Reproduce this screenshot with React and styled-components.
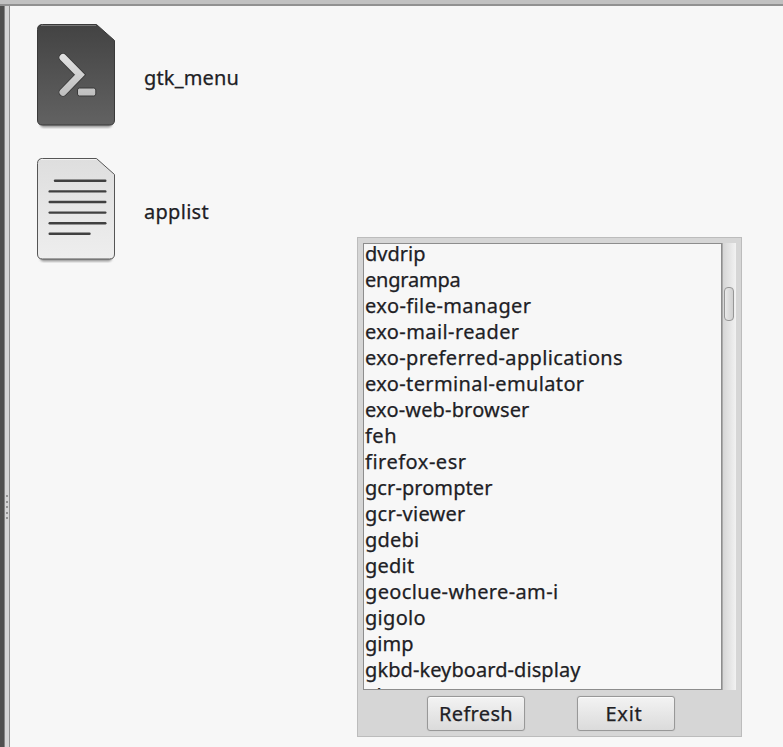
import React, { useLayoutEffect, useRef, useState } from "react";
import styled, { createGlobalStyle } from "styled-components";

const GlobalStyle = createGlobalStyle`
  * { box-sizing: border-box; }
  html, body { margin: 0; background: #f7f7f7; }
  body {
    overflow: hidden;
    font: 20px/26px "Noto Sans", "Open Sans", sans-serif;
    color: #202024;
    -webkit-text-stroke: 0.25px #202024;
  }
`;

const Screen = styled.div`
  display: flex;
  flex-direction: column;
  width: 783px;
  height: 747px;
  overflow: hidden;
  position: relative;
`;
const TopBar = styled.div`
  flex: none;
  height: 6px;
  background: #c1c1c1;
  border-bottom: 2px solid #919191;
`;
const Body = styled.div`
  flex: 1;
  display: flex;
`;
const SidePane = styled.div`
  width: 5px;
  background: #50504f;
  border-right: 1px solid #858585;
`;
const Splitter = styled.div`
  width: 5px;
  background: #d6d6d6;
  border-right: 1px solid #919191;
  display: flex;
  flex-direction: column;
  justify-content: center;
  align-items: center;
  gap: 3.5px;
  padding-top: 261px;
`;
const Grip = styled.i`
  width: 2px;
  height: 2px;
  background: #929292;
`;
const Files = styled.div`
  flex: 1;
  background: #f7f7f7;
  padding: 17px 0 0 27px;
  display: flex;
  flex-direction: column;
  gap: 26px;
`;
const FileItem = styled.div`
  display: flex;
  align-items: center;
  height: 108px;
  gap: 27px;
  svg { flex: none; }
`;
const FileName = styled.div`
  padding-top: 2px;
`;
const Dialog = styled.div`
  position: absolute;
  left: 357px;
  top: 237px;
  width: 385px;
  height: 500px;
  padding: 5px;
  background: #d6d6d6;
  border: 1px solid #bcbcbc;
  display: flex;
  flex-direction: column;
`;
const ListArea = styled.div`
  display: flex;
  height: 447px;
`;
const List = styled.div`
  width: 359px;
  border: 1px solid #8d8d8d;
  background: #f7f7f7;
  overflow: hidden;
  padding-left: 1px;
`;
const Rows = styled.div`
  margin-top: -3px;
`;
const Row = styled.div`
  height: 26px;
`;
const Track = styled.div`
  width: 14px;
  border-left: 1px solid #aaaaaa;
  background: linear-gradient(90deg, #d6d6d6, #f2f2f2);
  padding: 44px 2px 0 1px;
`;
const Thumb = styled.div`
  width: 10px;
  height: 34px;
  border: 1px solid #979797;
  border-radius: 4px;
  background: linear-gradient(90deg, #e9e9e9, #cfcfcf);
`;
const Buttons = styled.div`
  display: flex;
  gap: 52px;
  padding: 6px 0 0 64px;
`;
const Button = styled.button`
  width: 98px;
  height: 35px;
  padding: 0 ${(p) => p.$nudge || 0}px 0 0;
  border: 1px solid #989898;
  border-radius: 3px;
  background: linear-gradient(#f3f3f3, #dbdbdb);
  box-shadow: inset 0 1px #fbfbfb, 0 0 1px #aaa;
  font: inherit;
  color: inherit;
`;
const Label = styled.span`
  display: inline-block;
  white-space: pre;
`;

/* Spreads a label's letters so that it takes the given width. */
function FitLabel({ text, width }) {
  const ref = useRef(null);
  const [spacing, setSpacing] = useState(0);
  useLayoutEffect(() => {
    setSpacing((width - ref.current.getBoundingClientRect().width) / text.length);
  }, []);
  return <Label ref={ref} style={{ letterSpacing: spacing }}>{text}</Label>;
}

const PAGE = "M5.5 .5H59.5L77.5 16.5V96Q77.5 101 72.5 101H5.5Q.5 101 .5 96V5.5Q.5 .5 5.5 .5Z";

function PageShape({ id, top, bottom, stroke, highlight }) {
  return (
    <>
      <defs>
        <linearGradient id={id} x1="0" y1="0" x2="0" y2="1">
          <stop stopColor={top} />
          <stop offset="1" stopColor={bottom} />
        </linearGradient>
        <filter id={id + "-blur"}><feGaussianBlur stdDeviation="1.2" /></filter>
      </defs>
      <rect x="3" y="92" width="72" height="11.5" rx="4" fill="#999" filter={`url(#${id}-blur)`} />
      <path d={PAGE} fill={`url(#${id})`} stroke={stroke} />
      <path d="M4 1.5H59" stroke={highlight} fill="none" />
    </>
  );
}

function ScriptIcon() {
  return (
    <svg width="80" height="108" viewBox="0 -1 80 108">
      <PageShape id="script" top="#434343" bottom="#626262" stroke="#3a3a3a" highlight="#777" />
      <defs>
        <linearGradient id="prompt" gradientUnits="userSpaceOnUse" x1="0" y1="30" x2="0" y2="73">
          <stop stopColor="#e2e2e2" />
          <stop offset="1" stopColor="#bdbdbd" />
        </linearGradient>
      </defs>
      <path d="M26 33.5L43 50.8L26 68.2" fill="none" stroke="#393939" strokeWidth="8.8" strokeLinecap="round" />
      <path d="M26 33.5L43 50.8L26 68.2" fill="none" stroke="url(#prompt)" strokeWidth="7" strokeLinecap="round" />
      <rect x="40.5" y="64" width="18.3" height="8" rx="2" fill="url(#prompt)" stroke="#393939" />
    </svg>
  );
}

function TextIcon() {
  const lines = [[18, 68.3], [12.7, 68.3], [12.7, 68.3], [12.7, 68.3], [12.7, 68.3], [12.7, 52.5]];
  return (
    <svg width="80" height="108" viewBox="0 -1 80 108">
      <PageShape id="text" top="#dedede" bottom="#eeeeee" stroke="#555" highlight="#f2f2f2" />
      {lines.map(([a, b], i) => (
        <path key={i} d={`M${a} ${22.8 + i * 10.6}H${b}`} stroke="#404040" strokeWidth="2.4" strokeLinecap="round" />
      ))}
    </svg>
  );
}

const APPS = [
  ["dvdrip", 60.5], ["engrampa", 95.5], ["exo-file-manager", 166.5], ["exo-mail-reader", 154.5],
  ["exo-preferred-applications", 258], ["exo-terminal-emulator", 219.5], ["exo-web-browser", 164.5],
  ["feh", 32], ["firefox-esr", 101.5], ["gcr-prompter", 127.5], ["gcr-viewer", 100.5], ["gdebi", 54.5],
  ["gedit", 49.5], ["geoclue-where-am-i", 193.5], ["gigolo", 61], ["gimp", 48.5],
  ["gkbd-keyboard-display", 215.5], ["gksu", 42],
];

export default function App() {
  return (
    <>
      <GlobalStyle />
      <Screen>
        <TopBar />
        <Body>
          <SidePane />
          <Splitter>
            {[0, 1, 2, 3, 4].map((n) => <Grip key={n} />)}
          </Splitter>
          <Files>
            <FileItem><ScriptIcon /><FileName><FitLabel text="gtk_menu" width={95} /></FileName></FileItem>
            <FileItem><TextIcon /><FileName><FitLabel text="applist" width={65} /></FileName></FileItem>
          </Files>
        </Body>
        <Dialog>
          <ListArea>
            <List>
              <Rows>
                {APPS.map(([name, width]) => (
                  <Row key={name}><FitLabel text={name} width={width} /></Row>
                ))}
              </Rows>
            </List>
            <Track><Thumb /></Track>
          </ListArea>
          <Buttons>
            <Button><FitLabel text="Refresh" width={74} /></Button>
            <Button $nudge={4}><FitLabel text="Exit" width={37} /></Button>
          </Buttons>
        </Dialog>
      </Screen>
    </>
  );
}
